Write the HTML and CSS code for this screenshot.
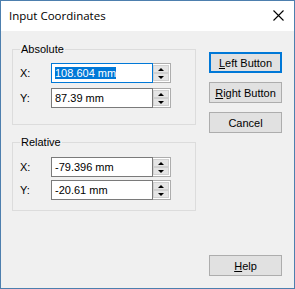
FILE: index.html
```html
<!DOCTYPE html>
<html>
<head>
    <title>Input Coordinates</title>
    <link rel="stylesheet" href="styles.css">
</head>
<body>
    <div class="window">
        <div class="titlebar">
            <span class="title">Input Coordinates</span>
            <svg class="close" width="11" height="11" viewBox="0 0 11 11">
                <path d="M0.5 0.5 L10.5 10.5 M10.5 0.5 L0.5 10.5" stroke="#000" stroke-width="1.1" fill="none"/>
            </svg>
        </div>
        <div class="client">
            <div class="groups">
                <fieldset class="group">
                    <legend>Absolute</legend>
                    <div class="row">
                        <span class="label">X:</span>
                        <div class="field focused"><span class="selected">108.604 mm</span></div>
                        <div class="spin"><span class="up"></span><span class="down"></span></div>
                    </div>
                    <div class="row">
                        <span class="label">Y:</span>
                        <div class="field">87.39 mm</div>
                        <div class="spin"><span class="up"></span><span class="down"></span></div>
                    </div>
                </fieldset>
                <fieldset class="group relative">
                    <legend>Relative</legend>
                    <div class="row">
                        <span class="label">X:</span>
                        <div class="field">-79.396 mm</div>
                        <div class="spin"><span class="up"></span><span class="down"></span></div>
                    </div>
                    <div class="row">
                        <span class="label">Y:</span>
                        <div class="field">-20.61 mm</div>
                        <div class="spin"><span class="up"></span><span class="down"></span></div>
                    </div>
                </fieldset>
            </div>
            <div class="buttons">
                <button class="btn default"><u>L</u>eft Button</button>
                <button class="btn"><u>R</u>ight Button</button>
                <button class="btn">Cancel</button>
                <button class="btn help"><u>H</u>elp</button>
            </div>
        </div>
    </div>
</body>
</html>
```

FILE: styles.css
```css
body {
    margin: 0;
    font-family: "Liberation Sans", Arial, sans-serif;
    font-size: 11px;
    color: #000;
}

.window {
    width: 295px;
    height: 289px;
    box-sizing: border-box;
    border: 1px solid #4d7fae;
    display: flex;
    flex-direction: column;
}

.titlebar {
    height: 30px;
    flex: none;
    background-color: #fff;
    display: flex;
    justify-content: space-between;
    align-items: center;
    padding: 0 10px 0 8px;
}

.title {
    font-family: "Open Sans", sans-serif;
    font-size: 11.5px;
    margin-top: -1px;
}

.close {
    margin-top: -1px;
}

.client {
    flex: 1;
    background-color: #f0f0f0;
    display: flex;
    gap: 13px;
    padding: 12px 12px 12px 11px;
}

.groups {
    width: 184px;
    display: flex;
    flex-direction: column;
    gap: 11px;
}

.group {
    margin: 0;
    border: 1px solid #dcdcdc;
    padding: 7px 7px 16px 7px;
    display: flex;
    flex-direction: column;
    gap: 5px;
    min-width: 0;
}

.group.relative {
    padding-top: 8px;
    padding-bottom: 10px;
    gap: 3px;
}

.group legend {
    padding: 0 1px;
    line-height: 13px;
}

.row {
    display: flex;
    align-items: center;
    height: 20px;
}

.label {
    width: 31px;
    flex: none;
}

.field {
    width: 102px;
    height: 20px;
    box-sizing: border-box;
    border: 1px solid #7a7a7a;
    background-color: #fff;
    padding-left: 3px;
    line-height: 18px;
    white-space: nowrap;
}

.field.focused {
    border-color: #0078d7;
}

.selected {
    background-color: #0078d7;
    color: #fff;
}

.spin {
    width: 18px;
    height: 20px;
    box-sizing: border-box;
    border: 1px solid #adadad;
    border-left: none;
    display: flex;
    flex-direction: column;
    background-color: #fff;
    padding: 1px 1px 1px 0;
    gap: 0;
}

.spin span {
    flex: 1;
    background-color: #e5e5e5;
    border: 1px solid #d0d0d0;
    display: flex;
    justify-content: center;
    align-items: center;
}

.spin .up::before {
    content: "";
    border-left: 3px solid transparent;
    border-right: 3px solid transparent;
    border-bottom: 3px solid #000;
}

.spin .down::before {
    content: "";
    border-left: 3px solid transparent;
    border-right: 3px solid transparent;
    border-top: 3px solid #000;
}

.buttons {
    width: 73px;
    display: flex;
    flex-direction: column;
    gap: 9px;
    padding-top: 9px;
}

.btn {
    height: 21px;
    box-sizing: border-box;
    background-color: #e1e1e1;
    border: 1px solid #adadad;
    font-family: "Liberation Sans", Arial, sans-serif;
    font-size: 11px;
    color: #000;
    padding: 0;
}

.btn.default {
    border: 2px solid #0078d7;
}

.btn.help {
    margin-top: auto;
}
```
